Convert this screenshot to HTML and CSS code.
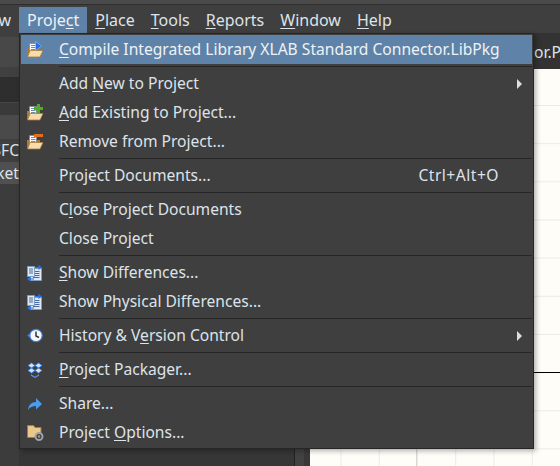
FILE: index.html
```html
<!DOCTYPE html>
<html lang="en">
    <head>
        <title>Project menu</title>
        <meta charset="utf-8">
        <link rel="stylesheet" href="styles.css">
    </head>

    <body>
        <svg class="defs" width="0" height="0">
            <defs>
                <g id="open-folder">
                    <path d="M1 7h2V5h4v2h7v8H1z" fill="#a9793c"/>
                    <path d="M3.500 2.500h7v8h-7z" fill="#fbfcfd" stroke="#7c8794" stroke-width=".8"/>
                    <path d="M5 4.500h4.500M5 6.500h4.500M5 8.500h4.500" stroke="#5f7a9c" stroke-width=".9"/>
                    <path d="M1.500 16l2.500-6.500h13L14 16z" fill="#f6dcaa" stroke="#a9793c" stroke-width=".8"/>
                </g>
                <g id="diff">
                    <path d="M4.500 4.500h11v12h-11z" fill="#dfe8f4" stroke="#7d9cc6"/>
                    <path d="M7 7.500h6.500M7 9.500h6.500M7 11.500h6.500M7 13.500h6.500" stroke="#4a6c98"/>
                    <path d="M1.500 2.500h7v10h-7z" fill="#dfe8f4" stroke="#7d9cc6"/>
                    <path d="M3 5h4M3 7h4M3 9h4" stroke="#4a6c98"/>
                    <path d="M9 3h3.500V.800L16 3.500l-3.500 2.500V4H9z" fill="#1f74f0"/>
                    <path d="M8 14.500H4.500v-2L1 15l3.500 2.500v-2H8z" fill="#1f74f0"/>
                </g>
            </defs>
        </svg>

        <div class="app">
            <div class="topstrip"></div>

            <div class="menubar">
                <span class="bar-item bar-cut">w</span>
                <span class="bar-item bar-active">Proje<u>c</u>t</span>
                <span class="bar-item"><u>P</u>lace</span>
                <span class="bar-item"><u>T</u>ools</span>
                <span class="bar-item"><u>R</u>eports</span>
                <span class="bar-item"><u>W</u>indow</span>
                <span class="bar-item"><u>H</u>elp</span>
            </div>

            <div class="work">
                <div class="side">
                    <div class="side-left">
                        <div class="pane pane-a"></div>
                        <div class="pane pane-b"></div>
                        <div class="pane pane-c"></div>
                        <div class="pane pane-d"></div>
                        <div class="pane pane-e"></div>
                        <div class="pane pane-f">SFC</div>
                        <div class="pane pane-g">cket</div>
                    </div>
                </div>
                <div class="doc">
                    <div class="tabs"><span class="tab-text">or.PcbLib</span></div>
                    <div class="doc-body">
                        <div class="ruler"></div>
                        <div class="canvas">
                            <div class="wire"></div>
                        </div>
                    </div>
                </div>
            </div>

            <div class="menu">
                <div class="row row-active">
                    <svg class="ico" viewBox="0 0 18 18"><use href="#open-folder"/><path d="M9.500 .5l6 4.500-6 4.500z" fill="#1f6ff0" stroke="#a9c8f5" stroke-width=".5"/></svg>
                    <span class="label"><u>C</u>ompile Integrated Library XLAB Standard Connector.LibPkg</span>
                </div>
                <div class="sep"></div>
                <div class="row">
                    <span class="ico"></span>
                    <span class="label">Add <u>N</u>ew to Project</span>
                    <span class="arrow"></span>
                </div>
                <div class="row">
                    <svg class="ico" viewBox="0 0 18 18"><use href="#open-folder"/><path d="M11 0h3v3h3v3h-3v3h-3V6H8V3h3z" fill="#4caf1e"/></svg>
                    <span class="label"><u>A</u>dd Existing to Project...</span>
                </div>
                <div class="row">
                    <svg class="ico" viewBox="0 0 18 18"><use href="#open-folder"/><path d="M8 1h9v3H8z" fill="#e0701e"/></svg>
                    <span class="label">Remove from Project...</span>
                </div>
                <div class="sep"></div>
                <div class="row">
                    <span class="ico"></span>
                    <span class="label">Project Documents...</span>
                    <span class="keys">Ctrl+Alt+O</span>
                </div>
                <div class="sep"></div>
                <div class="row">
                    <span class="ico"></span>
                    <span class="label">C<u>l</u>ose Project Documents</span>
                </div>
                <div class="row">
                    <span class="ico"></span>
                    <span class="label">Close Project</span>
                </div>
                <div class="sep"></div>
                <div class="row">
                    <svg class="ico" viewBox="0 0 18 18"><use href="#diff"/></svg>
                    <span class="label"><u>S</u>how Differences...</span>
                </div>
                <div class="row">
                    <svg class="ico" viewBox="0 0 18 18"><use href="#diff"/></svg>
                    <span class="label">Show Physical Differences...</span>
                </div>
                <div class="sep"></div>
                <div class="row">
                    <svg class="ico" viewBox="0 0 18 18">
                        <path d="M1 8.500l4-3v6z" fill="#2f7fe8"/>
                        <circle cx="10" cy="8.500" r="6.200" fill="#f6f8fa" stroke="#3f7fd8" stroke-width="1.200"/>
                        <path d="M10 4.500v4.500l3 1.500" fill="none" stroke="#333" stroke-width="1.500"/>
                    </svg>
                    <span class="label">History &amp; V<u>e</u>rsion Control</span>
                    <span class="arrow"></span>
                </div>
                <div class="sep"></div>
                <div class="row">
                    <svg class="ico" viewBox="0 0 18 18">
                        <path d="M5.500 2L9 4.500 5.500 7 2 4.500zM12.500 2L16 4.500 12.500 7 9 4.500zM5.500 7L9 9.500 5.500 12 2 9.500zM12.500 7L16 9.500 12.500 12 9 9.500z" fill="#d6e4fb" stroke="#3d7fe6"/>
                        <path d="M5 13.300l4 2.500 4-2.500v1.400l-4 2.300-4-2.300z" fill="#5f97ee"/>
                    </svg>
                    <span class="label"><u>P</u>roject Packager...</span>
                </div>
                <div class="sep"></div>
                <div class="row">
                    <svg class="ico" viewBox="0 0 18 18">
                        <path d="M2 15c.5-5 3.500-8 8-8V3l6 6-6 5.500v-3.500c-3.500 0-6 1-8 4z" fill="#4a9cf0"/>
                    </svg>
                    <span class="label">Share...</span>
                </div>
                <div class="row">
                    <svg class="ico" viewBox="0 0 18 18">
                        <path d="M1.500 1.500h6l1.500 2h6v10H1.500z" fill="#e8c88c" stroke="#a9793c"/>
                        <circle cx="13" cy="12.500" r="3.500" fill="#3d3d3d" stroke="#9aa3ad" stroke-width="2"/>
                        <circle cx="13" cy="12.500" r="1.200" fill="#b89a58"/>
                    </svg>
                    <span class="label">Project <u>O</u>ptions...</span>
                </div>
            </div>
        </div>
    </body>
</html>
```

FILE: styles.css
```css
*, *::before, *::after{
    box-sizing: border-box;
}

body{
    margin: 0;
    padding: 0;
    background: #3d3d3d;
    font-family: "Noto Sans", sans-serif;
    font-size: 15.6px;
    color: #dde3ea;
    overflow: hidden;
}

u{
    text-underline-offset: 2px;
    text-decoration-thickness: 1px;
}

.defs{
    display: block;
    height: 0;
}

.app{
    position: relative;
    width: 560px;
    height: 466px;
    display: flex;
    flex-direction: column;
}

.topstrip{
    height: 5px;
    background: #4a4a4a;
    border-bottom: 1px solid #2e2e2e;
}

.menubar{
    height: 28px;
    display: flex;
    background: #3f3f3f;
    margin-left: -42px;
}

.bar-item{
    padding: 0 8px;
    margin-top: 2px;
    font-size: 16px;
    line-height: 26px;
    white-space: nowrap;
}

.bar-cut{
    width: 61px;
    text-align: right;
}

.bar-active{
    background: #5f83a8;
    color: #eef2f6;
}

.work{
    flex: 1;
    display: flex;
    min-height: 0;
}

.side{
    width: 295px;
    background: #363636;
    border-right: 1px solid #222;
}

.side-left{
    width: 19px;
    height: 100%;
    background: #3c3c3c;
    overflow: hidden;
}

.pane{
    white-space: nowrap;
    direction: rtl;
}

.pane-a{ height: 4px; background: #3f3f3f; }
.pane-b{ height: 30px; background: #484848; }
.pane-c{ height: 10px; background: #404040; }
.pane-d{ height: 26px; background: #2e2e2e; border-bottom: 1px solid #454545; }
.pane-e{ height: 36px; background: #4a4a4a; border-top: 12px solid #3a3a3a; }
.pane-f{ height: 23px; background: #3f3f3f; line-height: 23px; }
.pane-g{ height: 22px; background: #505050; line-height: 22px; }

.doc{
    flex: 1;
    display: flex;
    flex-direction: column;
    min-width: 0;
}

.tabs{
    height: 36px;
    background: #333;
    overflow: hidden;
    line-height: 39px;
}

.tab-text{
    display: block;
    margin-left: 239px;
    white-space: nowrap;
}

.doc-body{
    flex: 1;
    display: flex;
    min-height: 0;
}

.ruler{
    width: 15px;
    background: linear-gradient(to right, #424242 9px, #383838 9px);
}

.canvas{
    position: relative;
    flex: 1;
    background-color: #fffdf8;
    background-image:
        linear-gradient(to right, #d8d8d4 1px, transparent 1px),
        linear-gradient(to right, #ecebe6 1px, transparent 1px),
        linear-gradient(to bottom, #ecebe6 1px, transparent 1px);
    background-size: 100% 100%, 38.25px 100%, 100% 38.17px;
    background-position: 106px 0, 30.500px 0, 0 36px;
    background-repeat: no-repeat, repeat-x, repeat-y;
}

.wire{
    position: absolute;
    left: 0;
    right: 0;
    top: 303px;
    height: 1px;
    background: #000;
}

/* dropdown sits over the window */
.menu{
    position: absolute;
    left: 19px;
    top: 33px;
    width: 515px;
    height: 416px;
    background: #3f3f3f;
    border: 1px solid #262626;
    padding: 1px 1px 0;
    box-shadow: 2px 2px 5px rgba(0,0,0,.3);
}

.row{
    height: 29px;
    display: flex;
    align-items: center;
    white-space: nowrap;
}

.row-active{
    background: #5f83a8;
    color: #eef2f6;
}

.ico{
    flex: none;
    width: 18px;
    height: 18px;
    margin-left: 5px;
    margin-right: 15px;
}

.label{
    flex: 1;
    padding-bottom: 2px;
}

.keys{
    margin-right: 33px;
    padding-bottom: 2px;
    letter-spacing: .5px;
}

.arrow{
    width: 0;
    height: 0;
    margin-right: 10px;
    border-left: 5px solid #dedede;
    border-top: 5px solid transparent;
    border-bottom: 5px solid transparent;
}

.sep{
    height: 5px;
    margin-left: 38px;
    padding-top: 2px;
}

.sep::before{
    content: "";
    display: block;
    height: 1px;
    background: #262626;
}
```
